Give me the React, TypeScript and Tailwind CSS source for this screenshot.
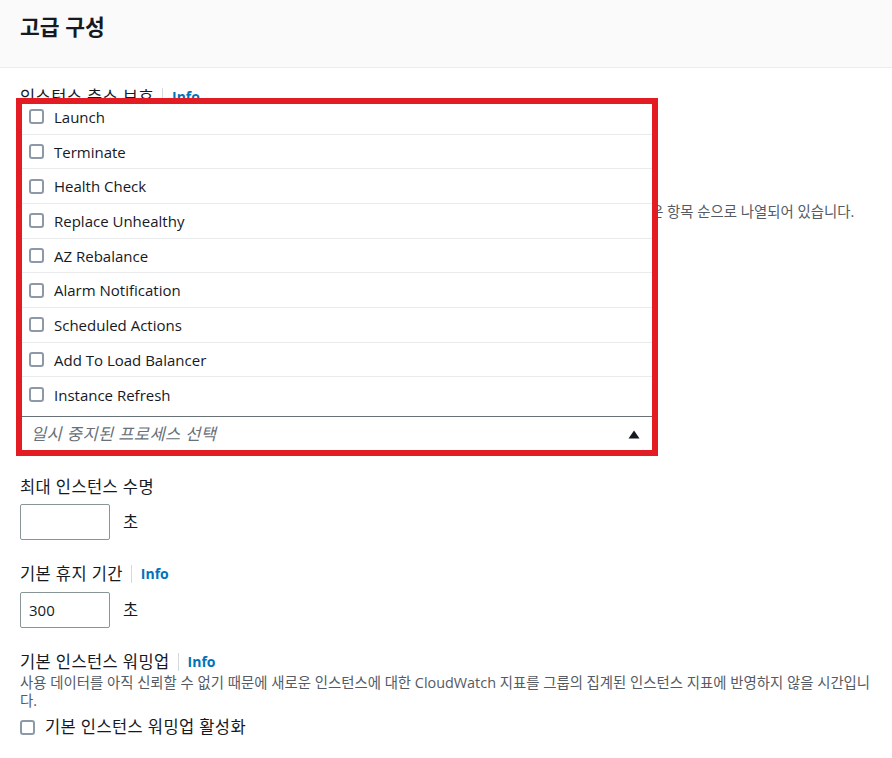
import React from 'react';

const processes = [
  'Launch',
  'Terminate',
  'Health Check',
  'Replace Unhealthy',
  'AZ Rebalance',
  'Alarm Notification',
  'Scheduled Actions',
  'Add To Load Balancer',
  'Instance Refresh',
];

const Checkbox: React.FC = () => (
  <span className="inline-block w-[15px] h-[15px] shrink-0 rounded-[3px] border-2 border-[#8d99a8] bg-white" />
);

const Info: React.FC = () => (
  <span className="ml-[8px] border-l border-[#d5dbdb] pl-[9px] text-[14px] font-bold leading-[18px] text-[#0073bb]">
    Info
  </span>
);

const Label: React.FC<{ children: React.ReactNode; info?: boolean; className?: string }> = ({ children, info, className = '' }) => (
  <div className={`flex items-center h-[22px] ${className}`}>
    <span className="text-[16.5px] leading-[22px] tracking-[0.4px]">{children}</span>
    {info && <Info />}
  </div>
);

export default function App() {
  return (
    <div className="w-[892px] h-[758px] overflow-hidden bg-white text-[#16191f] font-['Open_Sans','Noto_Sans_CJK_KR',sans-serif]">
      <header className="h-[68px] border-b border-[#eaeded] bg-[#fafafa] px-5 pt-[15px]">
        <h2 className="text-[21.5px] font-bold leading-6">고급 구성</h2>
      </header>

      <div className="px-5">
        {/* 인스턴스 축소 보호 (mostly hidden under the open dropdown) */}
        <Label info className="mt-[18px]">인스턴스 축소 보호</Label>
        <div className="mt-[10px] flex items-center gap-[10px]">
          <Checkbox />
          <span className="text-[16.5px] leading-5">축소 보호 활성화</span>
        </div>

        <Label info className="mt-[43px]">일시 중지된 프로세스</Label>
        <p className="whitespace-nowrap text-[14.4px] leading-[18px] text-[#545b64]">
          Auto Scaling 그룹에서 일시 중지할 프로세스를 선택합니다. 프로세스는 콘솔 화면상에 표시되는 순서와 같은 항목 순으로 나열되어 있습니다.
        </p>

        {/* Multiselect, expanded upward */}
        <div className="relative mt-[195px] flex h-[36px] w-[634px] items-center border border-[#687078] bg-white pl-[10px] pr-[13px]">
          <ul className="absolute bottom-full left-[-1px] right-[-1px] mb-px bg-white pb-[4px]">
            {processes.map((p, i) => (
              <li
                key={p}
                className={`flex h-[34.67px] items-center gap-[10px] pl-[9px] ${
                  i < processes.length - 1 ? 'border-b border-[#e9ebed]' : ''
                }`}
              >
                <Checkbox />
                <span className="text-[15px] leading-5">{p}</span>
              </li>
            ))}
          </ul>
          <span className="text-[16.5px] italic leading-5 tracking-[0.4px] text-[#687078]">일시 중지된 프로세스 선택</span>
          <svg className="ml-auto" width="12" height="9" viewBox="0 0 12 9">
            <polygon points="6,0.5 11.5,8.5 0.5,8.5" fill="#16191f" />
          </svg>
          <div className="pointer-events-none absolute left-[-5px] right-[-5px] top-[-319px] bottom-[-5px] border-[6px] border-[#e31b23]" />
        </div>

        {/* 최대 인스턴스 수명 */}
        <Label className="mt-[24px]">최대 인스턴스 수명</Label>
        <div className="mt-[6px] flex items-center">
          <div className="h-[36px] w-[90px] rounded-[2px] border border-[#879596]" />
          <span className="ml-[13px] text-[16.5px]">초</span>
        </div>

        {/* 기본 휴지 기간 */}
        <Label info className="mt-[23px]">기본 휴지 기간</Label>
        <div className="mt-[7px] flex items-center">
          <div className="flex h-[36px] w-[90px] items-center rounded-[2px] border border-[#879596] pl-[8px] text-[15px]">300</div>
          <span className="ml-[13px] text-[16.5px]">초</span>
        </div>

        {/* 기본 인스턴스 워밍업 */}
        <Label info className="mt-[23px]">기본 인스턴스 워밍업</Label>
        <p className="mt-px text-[14.4px] leading-[18px] text-[#545b64]">
          사용 데이터를 아직 신뢰할 수 없기 때문에 새로운 인스턴스에 대한 CloudWatch 지표를 그룹의 집계된 인스턴스 지표에 반영하지 않을 시간입니다.
        </p>
        <div className="mt-[7px] flex h-[20px] items-center gap-[10px]">
          <Checkbox />
          <span className="text-[16.5px] leading-5 tracking-[0.4px]">기본 인스턴스 워밍업 활성화</span>
        </div>
      </div>
    </div>
  );
}
